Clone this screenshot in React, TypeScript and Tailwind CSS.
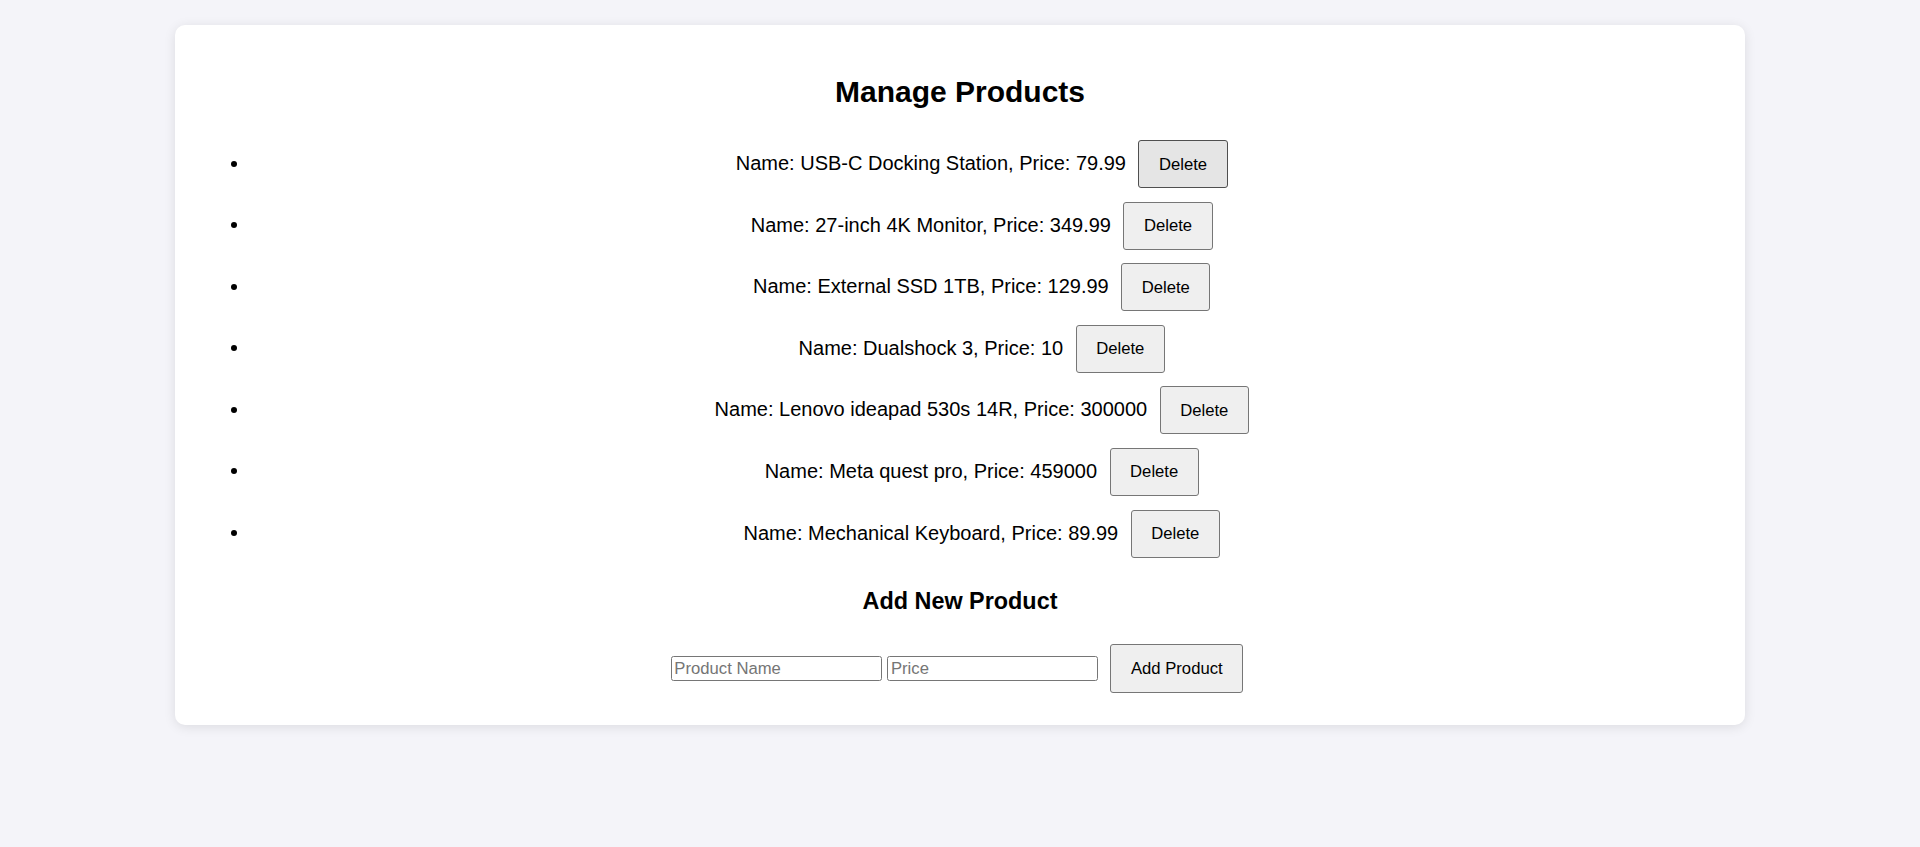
import { useState } from 'react';

const initialProducts = [
  { id: 1, name: 'USB-C Docking Station', price: '79.99' },
  { id: 2, name: '27-inch 4K Monitor', price: '349.99' },
  { id: 3, name: 'External SSD 1TB', price: '129.99' },
  { id: 4, name: 'Dualshock 3', price: '10' },
  { id: 5, name: 'Lenovo ideapad 530s 14R', price: '300000' },
  { id: 6, name: 'Meta quest pro', price: '459000' },
  { id: 7, name: 'Mechanical Keyboard', price: '89.99' },
];

const btn =
  'inline-block align-baseline border border-[#767676] bg-[#efefef] rounded-[3px] px-[19.5px] py-[13.5px] text-[16.67px] leading-[19px] text-black hover:bg-[#e5e5e5] hover:border-[#4f4f4f]';

export default function App() {
  const [products, setProducts] = useState(initialProducts);
  const [name, setName] = useState('');
  const [price, setPrice] = useState('');

  const addProduct = () => {
    if (!name || !price) return;
    setProducts([...products, { id: Date.now(), name, price }]);
    setName('');
    setPrice('');
  };

  return (
    <div className="min-h-[847px] bg-[#f4f4f9] pt-[25px] font-['Liberation_Sans',Arial,sans-serif] text-black">
      <div className="mx-auto w-[1570px] bg-white rounded-[10px] shadow-[0_2px_12px_rgba(0,0,0,0.1)] px-[25px] pt-[50px] pb-[31.5px]">
        <h2 className="text-center text-[30px] font-bold leading-[34.5px]">Manage Products</h2>

        <ul className="mt-[30.5px] list-disc pl-[50px] space-y-[13.6px]">
          {products.map((p, i) => (
            <li key={p.id} className="text-center text-[20px] leading-[23px] pr-[6.6px]">
              Name: {p.name}, Price: {p.price}
              <button
                onClick={() => setProducts(products.filter((x) => x.id !== p.id))}
                className={
                  i === 0
                    ? 'ml-[12.5px] inline-block align-baseline border border-[#4f4f4f] bg-[#e5e5e5] rounded-[3px] px-[19.5px] py-[13.5px] text-[16.67px] leading-[19px] text-black'
                    : 'ml-[12.5px] ' + btn
                }
              >
                Delete
              </button>
            </li>
          ))}
        </ul>

        <h3 className="mt-[30.5px] text-center text-[23.4px] font-bold leading-[27px]">Add New Product</h3>

        <div className="mt-[29px] flex items-center justify-center pr-[6px]">
          <input
            value={name}
            onChange={(e) => setName(e.target.value)}
            placeholder="Product Name"
            className="w-[211px] h-[25px] border border-[#767676] rounded-[2.5px] px-[2.5px] text-[16.67px] leading-[19px] placeholder:text-[#757575]"
          />
          <input
            value={price}
            onChange={(e) => setPrice(e.target.value)}
            placeholder="Price"
            className="ml-[5.6px] w-[211px] h-[25px] border border-[#767676] rounded-[2.5px] px-[2.5px] text-[16.67px] leading-[19px] placeholder:text-[#757575]"
          />
          <button onClick={addProduct} className={'ml-[12px] py-[14px] ' + btn.replace('py-[13.5px] ', '')}>
            Add Product
          </button>
        </div>
      </div>
    </div>
  );
}
